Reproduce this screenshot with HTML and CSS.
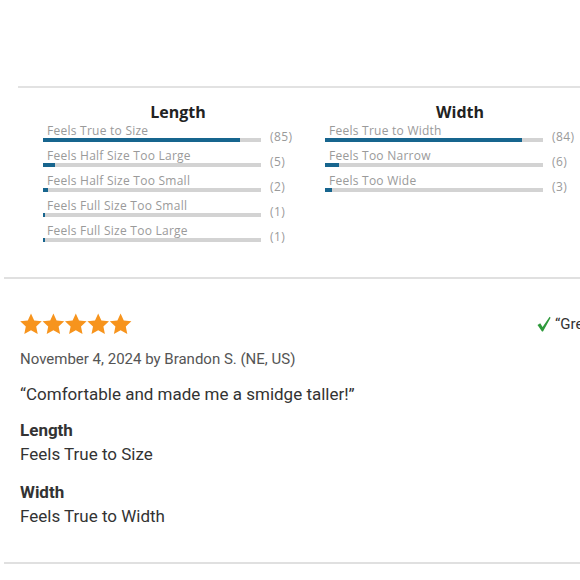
FILE: index.html
```html
<!DOCTYPE html>
<html>
<head>
<meta charset="utf-8">
<link rel="stylesheet" href="styles.css">
</head>
<body>
<section class="summary">
  <div class="col">
    <h3 class="col-title">Length</h3>
    <div class="rows">
      <div class="row"><div class="cell"><span class="label">Feels True to Size</span><div class="track"><div class="fill" style="width:90.4%"></div></div></div><span class="count">(85)</span></div>
      <div class="row"><div class="cell"><span class="label">Feels Half Size Too Large</span><div class="track"><div class="fill" style="width:5.3%"></div></div></div><span class="count">(5)</span></div>
      <div class="row"><div class="cell"><span class="label">Feels Half Size Too Small</span><div class="track"><div class="fill" style="width:2.1%"></div></div></div><span class="count">(2)</span></div>
      <div class="row"><div class="cell"><span class="label">Feels Full Size Too Small</span><div class="track"><div class="fill" style="width:1.1%"></div></div></div><span class="count">(1)</span></div>
      <div class="row"><div class="cell"><span class="label">Feels Full Size Too Large</span><div class="track"><div class="fill" style="width:1.1%"></div></div></div><span class="count">(1)</span></div>
    </div>
  </div>
  <div class="col">
    <h3 class="col-title">Width</h3>
    <div class="rows">
      <div class="row"><div class="cell"><span class="label">Feels True to Width</span><div class="track"><div class="fill" style="width:90.3%"></div></div></div><span class="count">(84)</span></div>
      <div class="row"><div class="cell"><span class="label">Feels Too Narrow</span><div class="track"><div class="fill" style="width:6.5%"></div></div></div><span class="count">(6)</span></div>
      <div class="row"><div class="cell"><span class="label">Feels Too Wide</span><div class="track"><div class="fill" style="width:3.2%"></div></div></div><span class="count">(3)</span></div>
    </div>
  </div>
</section>
<hr class="divider">
<article class="review">
  <div class="review-head">
    <svg class="stars" width="112" height="22" viewBox="0 0 112 22">
      <g fill="#f7941d">
        <polygon points="11,0.5 14.2,7.4 21.8,8.3 16.2,13.5 17.7,21 11,17.3 4.3,21 5.8,13.5 0.2,8.3 7.8,7.4"/>
        <polygon transform="translate(22.4 0)" points="11,0.5 14.2,7.4 21.8,8.3 16.2,13.5 17.7,21 11,17.3 4.3,21 5.8,13.5 0.2,8.3 7.8,7.4"/>
        <polygon transform="translate(44.8 0)" points="11,0.5 14.2,7.4 21.8,8.3 16.2,13.5 17.7,21 11,17.3 4.3,21 5.8,13.5 0.2,8.3 7.8,7.4"/>
        <polygon transform="translate(67.2 0)" points="11,0.5 14.2,7.4 21.8,8.3 16.2,13.5 17.7,21 11,17.3 4.3,21 5.8,13.5 0.2,8.3 7.8,7.4"/>
        <polygon transform="translate(89.6 0)" points="11,0.5 14.2,7.4 21.8,8.3 16.2,13.5 17.7,21 11,17.3 4.3,21 5.8,13.5 0.2,8.3 7.8,7.4"/>
      </g>
    </svg>
    <div class="headline">
      <svg class="check" width="14" height="16" viewBox="0 0 14 16"><path d="M0.5 9 L3.2 7.2 L5.6 11 L12.6 0.8 L13.6 1.8 L6 15.4 L5 15.4 Z" fill="#2f9a3c"/></svg>
      <span>“Great fit and comfortable”</span>
    </div>
  </div>
  <p class="meta">November 4, 2024 by Brandon S. (NE, US)</p>
  <p class="quote">“Comfortable and made me a smidge taller!”</p>
  <dl class="fit">
    <dt>Length</dt>
    <dd>Feels True to Size</dd>
    <dt>Width</dt>
    <dd>Feels True to Width</dd>
  </dl>
</article>
<hr class="divider">
</body>
</html>
```
FILE: styles.css
```css
html, body {
  margin: 0;
  padding: 0;
  background: #fff;
  overflow: hidden;
}
body {
  width: 580px;
  font-family: Roboto, "Liberation Sans", sans-serif;
}
.summary {
  margin: 86px 0 0 18px;
  border-top: 2px solid #e2e2e2;
  padding: 14px 0 0 25px;
  display: flex;
  gap: 12px;
  height: 175px;
  font-family: "Open Sans", "DejaVu Sans", sans-serif;
}
.col {
  flex: none;
  width: 270px;
}
.col-title {
  margin: 0;
  font-size: 16px;
  line-height: 20px;
  font-weight: 700;
  color: #222;
  text-align: center;
}
.rows {
  margin-top: 2px;
  display: flex;
  flex-direction: column;
  gap: 7px;
}
.row {
  display: flex;
  align-items: center;
  height: 18px;
}
.cell {
  width: 218px;
  flex: none;
  display: flex;
  flex-direction: column;
}
.label {
  font-size: 12px;
  line-height: 14px;
  color: #9a9a9a;
  padding-left: 4px;
  letter-spacing: 0.25px;
  white-space: nowrap;
}
.track {
  height: 4px;
  background: #d3d3d3;
}
.fill {
  height: 100%;
  background: #17658e;
}
.count {
  margin-left: 9px;
  margin-top: 6px;
  font-size: 12px;
  letter-spacing: 0.4px;
  color: #9a9a9a;
}
.divider {
  margin: 0 0 0 4px;
  border: 0;
  border-top: 2px solid #e0e0e0;
  height: 0;
}
.review {
  padding: 33px 0 34px 20px;
  color: #333;
}
.review-head {
  display: flex;
  align-items: center;
  height: 24px;
}
.stars {
  display: block;
}
.headline {
  margin-left: auto;
  width: 43px;
  flex: none;
  display: flex;
  align-items: center;
  gap: 4px;
  white-space: nowrap;
  font-size: 15px;
  color: #333;
}
.check {
  flex: none;
  display: block;
}
.meta {
  margin: 13px 0 0;
  font-size: 15px;
  line-height: 20px;
  color: #555;
}
.quote {
  margin: 13px 0 0;
  font-size: 17px;
  line-height: 24px;
  color: #333;
}
.fit {
  margin: 12px 0 0;
  font-size: 17px;
  line-height: 24px;
}
.fit dt {
  font-weight: 700;
  color: #333;
}
.fit dd {
  margin: 0 0 14px;
  color: #333;
}
.fit dd:last-child {
  margin-bottom: 0;
}
```
